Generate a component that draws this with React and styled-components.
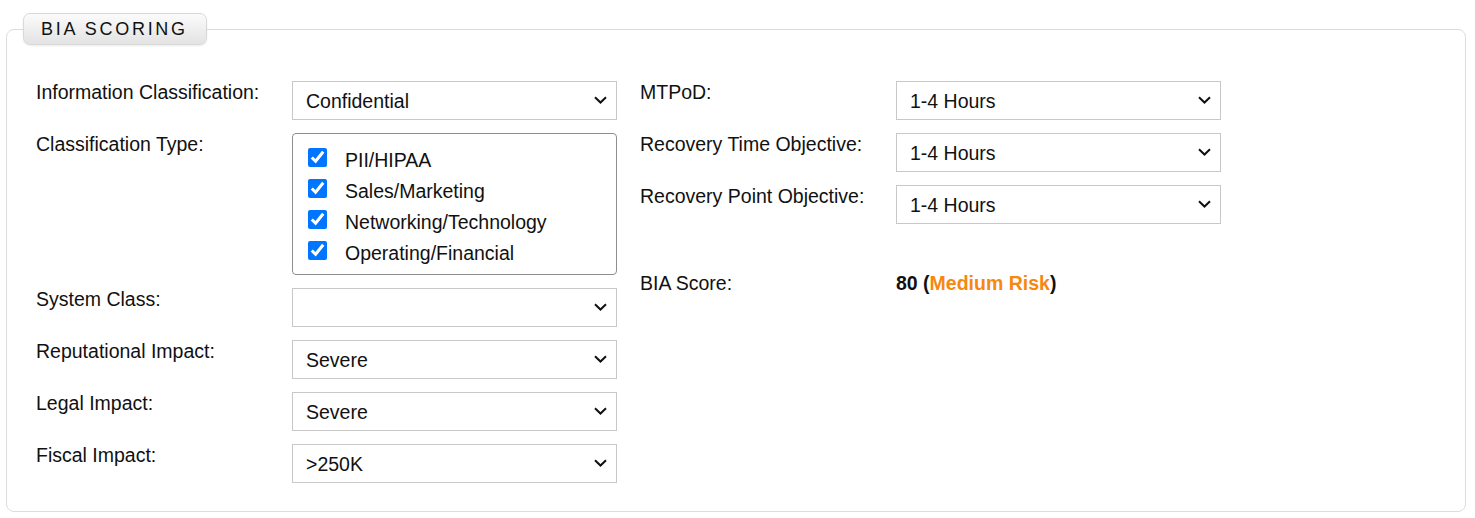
import React from 'react';
import styled, { createGlobalStyle } from 'styled-components';

const GlobalStyle = createGlobalStyle`
  body {
    margin: 0;
    background: #fff;
    font-family: "Liberation Sans", Arial, sans-serif;
    color: #111;
  }
`;

const Page = styled.div`
  padding: 13px 9px 6px 6px;
`;

const Fieldset = styled.fieldset`
  margin: 0;
  padding: 0 0 28px 0;
  border: 1px solid #dcdcdc;
  border-radius: 8px;
  min-width: 0;
`;

const Legend = styled.legend`
  margin-left: 16px;
  padding: 0 18px 0 17px;
  height: 32px;
  line-height: 31px;
  box-sizing: border-box;
  border: 1px solid #d9d9d9;
  border-radius: 7px;
  background: linear-gradient(#fbfbfb, #e3e3e3);
  box-shadow: 0 1px 2px rgba(0, 0, 0, 0.08);
  font-size: 18px;
  letter-spacing: 2.7px;
  color: #111;
`;

const Columns = styled.div`
  display: flex;
  gap: 23px;
  padding: 36px 0 0 29px;
`;

const FormGrid = styled.div`
  display: grid;
  grid-template-columns: 256px 325px;
  row-gap: 13px;
  align-items: start;
  align-content: start;
`;

const Label = styled.label`
  font-size: 19.5px;
  line-height: 21px;
  padding-top: 1px;
  color: #111;
`;

const SelectWrap = styled.div`
  position: relative;
  width: 325px;
  height: 39px;
`;

const Select = styled.select`
  appearance: none;
  width: 100%;
  height: 100%;
  margin: 0;
  padding: 0 32px 0 13px;
  border: 1px solid #c8c8c8;
  border-radius: 0;
  background: #fff;
  font-family: "Liberation Sans", Arial, sans-serif;
  font-size: 19.5px;
  color: #111;
`;

const Chevron = styled.svg`
  position: absolute;
  right: 10px;
  top: 15px;
  width: 13px;
  height: 8px;
  pointer-events: none;
`;

const CheckList = styled.div`
  display: flex;
  flex-direction: column;
  gap: 12px;
  padding: 14px 15px 14px;
  border: 1px solid #8e8e8e;
  border-radius: 4px;
  box-sizing: border-box;
  width: 325px;
`;

const CheckRow = styled.label`
  display: flex;
  align-items: center;
  gap: 18px;
  height: 19px;
  font-size: 19.5px;
  color: #111;
`;

const CheckText = styled.span`
  margin-top: 6px;
`;

const Checkbox = styled.input`
  width: 19px;
  height: 19px;
  margin: 0;
`;

const ScoreRow = styled.div`
  grid-column: 1 / -1;
  display: grid;
  grid-template-columns: 256px auto;
  margin-top: 36px;
  font-size: 19.5px;
  line-height: 21px;
`;

const Score = styled.span`
  font-weight: bold;
  color: #111;
`;

const Risk = styled.span`
  color: #f7870f;
`;

const leftFields = [
  { label: 'Information Classification:', value: 'Confidential' },
  { label: 'Classification Type:', checks: ['PII/HIPAA', 'Sales/Marketing', 'Networking/Technology', 'Operating/Financial'] },
  { label: 'System Class:', value: '' },
  { label: 'Reputational Impact:', value: 'Severe' },
  { label: 'Legal Impact:', value: 'Severe' },
  { label: 'Fiscal Impact:', value: '>250K' },
];

const rightFields = [
  { label: 'MTPoD:', value: '1-4 Hours' },
  { label: 'Recovery Time Objective:', value: '1-4 Hours' },
  { label: 'Recovery Point Objective:', value: '1-4 Hours' },
];

function Dropdown({ value }) {
  return (
    <SelectWrap>
      <Select defaultValue={value}>
        <option value={value}>{value}</option>
      </Select>
      <Chevron viewBox="0 0 13 8">
        <path d="M1 1.2 L6.5 6.5 L12 1.2" fill="none" stroke="#111" strokeWidth="2" />
      </Chevron>
    </SelectWrap>
  );
}

function Field({ label, value, checks }) {
  return (
    <>
      <Label>{label}</Label>
      {checks ? (
        <CheckList>
          {checks.map(c => (
            <CheckRow key={c}>
              <Checkbox type="checkbox" defaultChecked />
              <CheckText>{c}</CheckText>
            </CheckRow>
          ))}
        </CheckList>
      ) : (
        <Dropdown value={value} />
      )}
    </>
  );
}

export default function App() {
  return (
    <Page>
      <GlobalStyle />
      <Fieldset>
        <Legend>BIA SCORING</Legend>
        <Columns>
          <FormGrid>
            {leftFields.map(f => <Field key={f.label} {...f} />)}
          </FormGrid>
          <FormGrid>
            {rightFields.map(f => <Field key={f.label} {...f} />)}
            <ScoreRow>
              <span>BIA Score:</span>
              <Score>80 (<Risk>Medium Risk</Risk>)</Score>
            </ScoreRow>
          </FormGrid>
        </Columns>
      </Fieldset>
    </Page>
  );
}
